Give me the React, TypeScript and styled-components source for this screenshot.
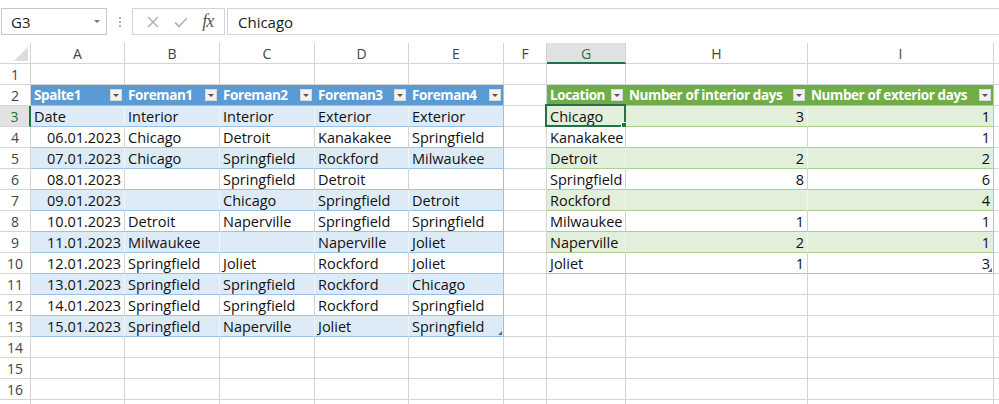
import styled, { createGlobalStyle } from "styled-components";

const GlobalStyle = createGlobalStyle`
  body {
    margin: 0;
    background: #fff;
    overflow: hidden;
  }
`;

const Page = styled.div`
  width: 999px;
  height: 404px;
  overflow: hidden;
  font-family: "Open Sans", "Noto Sans", sans-serif;
`;

const FormulaBar = styled.div`
  height: 43px;
  box-sizing: border-box;
  padding: 8px 0 0 1px;
  display: flex;
  align-items: flex-start;
`;

const NameBox = styled.div`
  box-sizing: border-box;
  width: 106px;
  height: 27px;
  border: 1px solid #c6c6c6;
  display: flex;
  align-items: center;
  justify-content: space-between;
  padding: 0 6px 0 9px;
  font-size: 15px;
  color: #222;
`;

const Caret = styled.span`
  width: 0;
  height: 0;
  border-left: 3px solid transparent;
  border-right: 3px solid transparent;
  border-top: 3px solid #777;
`;

const Dots = styled.div`
  width: 25px;
  height: 27px;
  display: flex;
  flex-direction: column;
  align-items: center;
  justify-content: center;
  gap: 2px;

  span {
    width: 2px;
    height: 2px;
    background: #b0b0b0;
  }
`;

const ButtonBox = styled.div`
  box-sizing: border-box;
  width: 93px;
  height: 27px;
  border: 1px solid #d4d4d4;
  display: flex;
  align-items: center;
  justify-content: space-around;
  padding: 0 4px 0 6px;
  margin-right: 2px;
`;

const Fx = styled.span`
  font-family: "Liberation Serif", "DejaVu Serif", serif;
  font-style: italic;
  font-size: 18px;
  color: #555;
  letter-spacing: -1px;
`;

const FormulaInput = styled.div`
  box-sizing: border-box;
  flex: 1;
  height: 27px;
  border: 1px solid #d4d4d4;
  border-right: none;
  display: flex;
  align-items: center;
  padding-left: 10px;
  font-size: 15px;
  color: #222;
`;

const Sheet = styled.div`
  display: grid;
  grid-template-columns: 31px 94px 95px 95px 94px 95px 43px 79px 182px 186px 20px;
  grid-auto-rows: 21px;
`;

const Corner = styled.div`
  box-sizing: border-box;
  border-right: 1px solid #d4d4d4;
  border-bottom: 1px solid #d4d4d4;
  display: flex;
  align-items: flex-end;
  justify-content: flex-end;
  padding: 0 2px 2px 0;
`;

const ColHead = styled.div<{ $active?: boolean }>`
  box-sizing: border-box;
  border-right: 1px solid #d4d4d4;
  border-bottom: ${(p) => (p.$active ? "2px solid #217346" : "1px solid #d4d4d4")};
  background: ${(p) => (p.$active ? "#e1e1e1" : "#fff")};
  color: ${(p) => (p.$active ? "#217346" : "#444")};
  display: flex;
  align-items: center;
  justify-content: center;
  font-size: 14px;
  padding-top: 1px;
`;

const RowHead = styled.div<{ $active?: boolean }>`
  box-sizing: border-box;
  border-right: ${(p) => (p.$active ? "2px solid #217346" : "1px solid #d4d4d4")};
  border-bottom: 1px solid #d4d4d4;
  background: ${(p) => (p.$active ? "#e1e1e1" : "#fff")};
  color: ${(p) => (p.$active ? "#217346" : "#444")};
  display: flex;
  align-items: center;
  justify-content: center;
  font-size: 14px;
`;

const Cell = styled.div<{
  $fill?: string;
  $h?: string;
  $v?: string;
  $right?: boolean;
  $head?: boolean;
}>`
  box-sizing: border-box;
  position: relative;
  border-right: 1px solid ${(p) => p.$v ?? "#d4d4d4"};
  border-bottom: 1px solid ${(p) => p.$h ?? "#d4d4d4"};
  background: ${(p) => p.$fill ?? "#fff"};
  display: flex;
  align-items: center;
  justify-content: ${(p) => (p.$right ? "flex-end" : "space-between")};
  padding: 0 ${(p) => (p.$head ? "2px" : "3px")} 0 3px;
  font-size: ${(p) => (p.$head ? "13.5px" : "14.5px")};
  letter-spacing: ${(p) => (p.$head ? "-0.4px" : "0")};
  font-weight: ${(p) => (p.$head ? 700 : 400)};
  color: ${(p) => (p.$head ? "#fff" : "#111")};
  white-space: nowrap;
  overflow: visible;
`;

const ActiveFrame = styled.div`
  position: absolute;
  left: -2px;
  top: -2px;
  right: -1px;
  bottom: -1px;
  border: 2px solid #217346;
  pointer-events: none;

  &::after {
    content: "";
    position: absolute;
    right: -4px;
    bottom: -4px;
    width: 5px;
    height: 5px;
    background: #217346;
    border: 1px solid #fff;
  }
`;

const FilterButton = styled.span`
  box-sizing: border-box;
  width: 12px;
  height: 12px;
  flex-shrink: 0;
  background: #f2f2f2;
  border: 1px solid #d9d9d9;
  display: flex;
  align-items: center;
  justify-content: center;

  &::after {
    content: "";
    border-left: 3px solid transparent;
    border-right: 3px solid transparent;
    border-top: 3px solid #555;
  }
`;

const ResizeMark = styled.span`
  position: absolute;
  right: 1px;
  bottom: 1px;
  width: 0;
  height: 0;
  border-left: 4px solid transparent;
  border-bottom: 4px solid #5a6e86;
`;

const columns = ["A", "B", "C", "D", "E", "F", "G", "H", "I", ""];

const blueHeader = ["Spalte1", "Foreman1", "Foreman2", "Foreman3", "Foreman4"];
const blueRows = [
  ["Date", "Interior", "Interior", "Exterior", "Exterior"],
  ["06.01.2023", "Chicago", "Detroit", "Kanakakee", "Springfield"],
  ["07.01.2023", "Chicago", "Springfield", "Rockford", "Milwaukee"],
  ["08.01.2023", "", "Springfield", "Detroit", ""],
  ["09.01.2023", "", "Chicago", "Springfield", "Detroit"],
  ["10.01.2023", "Detroit", "Naperville", "Springfield", "Springfield"],
  ["11.01.2023", "Milwaukee", "", "Naperville", "Joliet"],
  ["12.01.2023", "Springfield", "Joliet", "Rockford", "Joliet"],
  ["13.01.2023", "Springfield", "Springfield", "Rockford", "Chicago"],
  ["14.01.2023", "Springfield", "Springfield", "Rockford", "Springfield"],
  ["15.01.2023", "Springfield", "Naperville", "Joliet", "Springfield"],
];

const greenHeader = ["Location", "Number of interior days", "Number of exterior days"];
const greenRows = [
  ["Chicago", "3", "1"],
  ["Kanakakee", "", "1"],
  ["Detroit", "2", "2"],
  ["Springfield", "8", "6"],
  ["Rockford", "", "4"],
  ["Milwaukee", "1", "1"],
  ["Naperville", "2", "1"],
  ["Joliet", "1", "3"],
];

const BLUE = { head: "#5b9bd5", band: "#ddebf7", line: "#9bc2e6", light: "#eef5fb" };
const GREEN = { head: "#70ad47", band: "#e2efda", line: "#a9d08e", light: "#f1f7ec" };

function renderCell(row: number, col: number) {
  const key = `${row}-${col}`;

  // blue table: rows 2..13, columns A..E (1..5)
  if (row >= 2 && row <= 13 && col >= 1 && col <= 5) {
    const lastCol = col === 5;
    if (row === 2) {
      return (
        <Cell key={key} $head $fill={BLUE.head} $h={BLUE.line} $v={lastCol ? BLUE.line : BLUE.head}>
          {blueHeader[col - 1]}
          <FilterButton />
        </Cell>
      );
    }
    const banded = (row - 3) % 2 === 0;
    const value = blueRows[row - 3][col - 1];
    return (
      <Cell
        key={key}
        $fill={banded ? BLUE.band : "#fff"}
        $h={BLUE.line}
        $v={lastCol ? BLUE.line : banded ? BLUE.light : "#d4d4d4"}
        $right={col === 1 && row > 3}
      >
        {value}
        {row === 13 && lastCol && <ResizeMark />}
      </Cell>
    );
  }

  // green table: rows 2..10, columns G..I (7..9)
  if (row >= 2 && row <= 10 && col >= 7 && col <= 9) {
    const lastCol = col === 9;
    if (row === 2) {
      return (
        <Cell key={key} $head $fill={GREEN.head} $h={GREEN.line} $v={lastCol ? GREEN.line : GREEN.head}>
          {greenHeader[col - 7]}
          <FilterButton />
        </Cell>
      );
    }
    const banded = (row - 3) % 2 === 0;
    const value = greenRows[row - 3][col - 7];
    return (
      <Cell
        key={key}
        $fill={banded ? GREEN.band : "#fff"}
        $h={GREEN.line}
        $v={lastCol ? GREEN.line : banded ? GREEN.light : "#d4d4d4"}
        $right={col > 7}
      >
        {value}
        {row === 3 && col === 7 && <ActiveFrame />}
        {row === 10 && lastCol && <ResizeMark />}
      </Cell>
    );
  }

  return <Cell key={key} />;
}

export default function App() {
  const rows = Array.from({ length: 17 }, (_, i) => i + 1);

  return (
    <Page>
      <GlobalStyle />
      <FormulaBar>
        <NameBox>
          G3
          <Caret />
        </NameBox>
        <Dots>
          <span />
          <span />
          <span />
        </Dots>
        <ButtonBox>
          <svg width="14" height="14" viewBox="0 0 14 14">
            <path d="M2 2 L12 12 M12 2 L2 12" stroke="#b5b5b5" strokeWidth="1.6" fill="none" />
          </svg>
          <svg width="16" height="14" viewBox="0 0 16 14">
            <path d="M2 7.5 L6 11.5 L14 3" stroke="#b5b5b5" strokeWidth="1.8" fill="none" />
          </svg>
          <Fx>fx</Fx>
        </ButtonBox>
        <FormulaInput>Chicago</FormulaInput>
      </FormulaBar>

      <Sheet>
        <Corner>
          <svg width="14" height="14" viewBox="0 0 14 14">
            <polygon points="14,0 14,14 0,14" fill="#dcdcdc" />
          </svg>
        </Corner>
        {columns.map((c, i) => (
          <ColHead key={i} $active={c === "G"}>
            {c}
          </ColHead>
        ))}
        {rows.map((r) => [
          <RowHead key={`h${r}`} $active={r === 3}>
            {r <= 16 ? r : ""}
          </RowHead>,
          ...columns.map((_, ci) => renderCell(r, ci + 1)),
        ])}
      </Sheet>
    </Page>
  );
}
